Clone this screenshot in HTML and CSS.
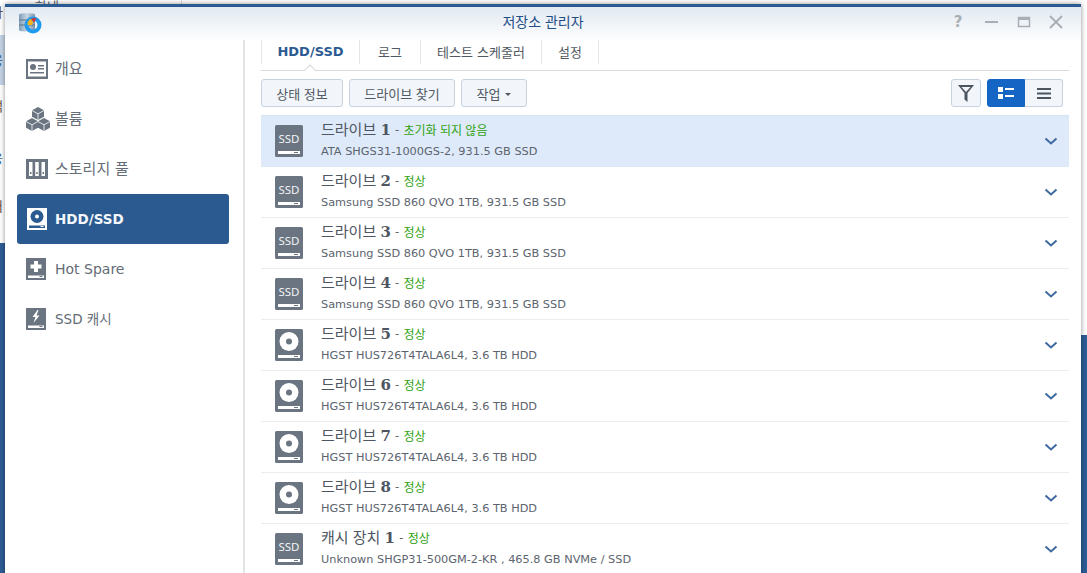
FILE: index.html
```html
<!DOCTYPE html>
<html lang="ko">
<head>
  <meta charset="UTF-8">
  <title>저장소 관리자</title>
  <link rel="stylesheet" href="styles.css">
</head>
<body>
  <svg class="defs" width="0" height="0">
    <symbol id="hdd" viewBox="0 0 28 32">
      <rect width="28" height="32" rx="1.5" fill="#6b7582"/>
      <circle cx="14" cy="12.5" r="9.5" fill="#fff"/>
      <circle cx="14" cy="12.5" r="3" fill="#6b7582"/>
      <rect x="3" y="26" width="22" height="3" fill="#fff"/>
      <rect x="19" y="27" width="4" height="1" fill="#6b7582"/>
    </symbol>
    <symbol id="ssd" viewBox="0 0 28 32">
      <rect width="28" height="32" rx="1.5" fill="#6b7582"/>
      <rect x="3" y="26" width="22" height="3" fill="#fff"/>
      <rect x="19" y="27" width="4" height="1" fill="#6b7582"/>
    </symbol>
    <symbol id="chevron" viewBox="0 0 14 9">
      <path d="M1.500 1.500 7 6.500l5.500-5" fill="none" stroke="#3f6a9f" stroke-width="2"/>
    </symbol>
  </svg>

  <div class="desktop">
    <div class="back back-left">
      <span class="back-selected"></span>
      <span class="back-char c1">나</span>
      <span class="back-char c2">웅</span>
      <span class="back-char c3">맥</span>
      <span class="back-char c4">응</span>
      <span class="back-char c5">더</span>
    </div>
    <div class="back back-top">
      <span class="back-rule"></span>
      <span class="back-word">하네</span>
    </div>
    <div class="back back-right"></div>

    <div class="window">
      <header class="titlebar">
        <svg class="app-icon" width="24" height="22" viewBox="0 0 24 22">
          <defs>
            <linearGradient id="can" x1="0" x2="1" y1="0" y2="0">
              <stop offset="0" stop-color="#7f9db8"/>
              <stop offset=".5" stop-color="#c9d6e0"/>
              <stop offset="1" stop-color="#7b94ab"/>
            </linearGradient>
          </defs>
          <path d="M1 2.500C1 .8 17 .8 17 2.500V18c0 2-16 2-16 0z" fill="url(#can)"/>
          <path d="M1 8h16M1 13h16" stroke="#5d7488" stroke-width="1"/>
          <circle cx="15" cy="13" r="6.500" fill="none" stroke="#1e9bef" stroke-width="4"/>
          <path d="M9.500 13A6.500 6.500 0 0 1 13 6.800L15 10.500l-1 2.500z" fill="#f2b51c"/>
          <path d="M13 6.500 18.500 6 16 10.500z" fill="#df2a2a"/>
        </svg>
        <h1 class="title">저장소 관리자</h1>
        <div class="win-controls">
          <span class="help">?</span>
          <svg width="14" height="14" viewBox="0 0 14 14"><rect x="0" y="6" width="13" height="2" fill="#a9aeb4"/></svg>
          <svg width="14" height="14" viewBox="0 0 14 14"><path d="M1.500 2.500h11v9h-11z" fill="none" stroke="#a9aeb4" stroke-width="1.500"/><rect x="1" y="2" width="12" height="3" fill="#a9aeb4"/></svg>
          <svg width="14" height="14" viewBox="0 0 14 14"><path d="m1 1 12 12M13 1 1 13" stroke="#a9aeb4" stroke-width="1.800"/></svg>
        </div>
      </header>

      <div class="body">
        <nav class="sidebar">
          <a class="nav-item">
            <svg class="nav-icon" width="22" height="20" viewBox="0 0 22 20"><rect width="22" height="20" fill="#6b7582"/><rect x="2" y="2.500" width="18" height="15" fill="#fff"/><circle cx="7" cy="8" r="3" fill="#6b7582"/><path d="M12 6h6v1.500h-6zM12 9h6v1.500h-6zM4 13h14v1.500H4z" fill="#6b7582"/></svg>
            <span class="ko">개요</span>
          </a>
          <a class="nav-item">
            <svg class="nav-icon" width="24" height="24" viewBox="0 0 24 24"><path d="M12 0l6 3.300v6.400l-6 3.300-6-3.300V3.300zM6 11l6 3.300v6.400l-6 3.300-6-3.300v-6.400zM18 11l6 3.300v6.400L18 24l-6-3.300v-6.400z" fill="#6b7582"/><path d="M6 3.500l6 3.300 6-3.300M12 7v6M0 14.500l6 3.300 6-3.300M6 18v6M12 14.500l6 3.300 6-3.300M18 18v6" fill="none" stroke="#fff" stroke-width=".8"/></svg>
            <span class="ko">볼륨</span>
          </a>
          <a class="nav-item">
            <svg class="nav-icon" width="22" height="20" viewBox="0 0 22 20"><rect width="22" height="20" fill="#6b7582"/><path d="M3 3h3.500v14H3zM9.200 3h3.500v14H9.200zM15.500 3H19v14h-3.500z" fill="#fff"/><path d="M4 13h1.500v2H4zM10.200 13h1.500v2h-1.500zM16.500 13H18v2h-1.500z" fill="#6b7582"/></svg>
            <span class="ko">스토리지 풀</span>
          </a>
          <a class="nav-item active">
            <svg class="nav-icon" width="20" height="22" viewBox="0 0 20 22"><rect width="20" height="22" fill="#fff"/><circle cx="10" cy="8.500" r="6.500" fill="#2a5a8f"/><circle cx="10" cy="8.500" r="2" fill="#fff"/><rect x="2" y="17.500" width="16" height="2.500" fill="#2a5a8f"/><rect x="13.500" y="18" width="3" height="1" fill="#fff"/></svg>
            <span>HDD/SSD</span>
          </a>
          <a class="nav-item">
            <svg class="nav-icon" width="20" height="22" viewBox="0 0 20 22"><rect width="20" height="22" fill="#6b7582"/><path d="M8 3h4v3.500h3.500v4H12V14H8v-3.500H4.500v-4H8z" fill="#fff"/><rect x="2" y="17.500" width="16" height="2.500" fill="#fff"/><rect x="13.500" y="18" width="3" height="1" fill="#6b7582"/></svg>
            <span class="latin">Hot Spare</span>
          </a>
          <a class="nav-item">
            <svg class="nav-icon" width="20" height="22" viewBox="0 0 20 22"><rect width="20" height="22" fill="#6b7582"/><path d="M11.500 2 6.500 9h3L7.500 15l6-7.500h-3l2-5.500z" fill="#fff"/><rect x="2" y="17.500" width="16" height="2.500" fill="#fff"/><rect x="13.500" y="18" width="3" height="1" fill="#6b7582"/></svg>
            <span class="raised">SSD 캐시</span>
          </a>
        </nav>

        <main class="content">
          <div class="tabs">
            <a class="tab active">HDD/SSD</a>
            <a class="tab">로그</a>
            <a class="tab">테스트 스케줄러</a>
            <a class="tab">설정</a>
          </div>

          <div class="toolbar">
            <button class="btn">상태 정보</button>
            <button class="btn">드라이브 찾기</button>
            <button class="btn">작업 <i class="caret"></i></button>
            <div class="toolbar-right">
              <button class="btn icon-btn">
                <svg width="18" height="19" viewBox="0 0 18 19"><path d="M1 1h16L10.500 9v9l-3-2.500V9z M4.500 3 9 8l4.500-5z" fill="#4b5560" fill-rule="evenodd"/></svg>
              </button>
              <div class="view-toggle">
                <button class="btn toggle-on">
                  <svg width="16" height="12" viewBox="0 0 16 12"><path d="M0 0h5v5H0zM0 7h5v5H0zM7 1h9v2H7zM7 8h9v2H7z" fill="#fff"/></svg>
                </button>
                <button class="btn toggle-off">
                  <svg width="14" height="11" viewBox="0 0 14 11"><path d="M0 0h14v2H0zM0 4.500h14v2H0zM0 9h14v2H0z" fill="#4b5560"/></svg>
                </button>
              </div>
            </div>
          </div>

          <ul class="drives">
            <li class="drive selected">
              <svg class="drive-icon" width="28" height="32" viewBox="0 0 28 32"><use href="#ssd"/><text class="ssd-label" x="14" y="18" text-anchor="middle">SSD</text></svg>
              <div class="drive-text">
                <div class="drive-name">드라이브 <b>1</b> <span class="dash">-</span> <span class="status">초기화 되지 않음</span></div>
                <div class="drive-model">ATA SHGS31-1000GS-2, 931.5 GB SSD</div>
              </div>
              <svg class="chevron" width="14" height="9"><use href="#chevron"/></svg>
            </li>
            <li class="drive">
              <svg class="drive-icon" width="28" height="32" viewBox="0 0 28 32"><use href="#ssd"/><text class="ssd-label" x="14" y="18" text-anchor="middle">SSD</text></svg>
              <div class="drive-text">
                <div class="drive-name">드라이브 <b>2</b> <span class="dash">-</span> <span class="status">정상</span></div>
                <div class="drive-model">Samsung SSD 860 QVO 1TB, 931.5 GB SSD</div>
              </div>
              <svg class="chevron" width="14" height="9"><use href="#chevron"/></svg>
            </li>
            <li class="drive">
              <svg class="drive-icon" width="28" height="32" viewBox="0 0 28 32"><use href="#ssd"/><text class="ssd-label" x="14" y="18" text-anchor="middle">SSD</text></svg>
              <div class="drive-text">
                <div class="drive-name">드라이브 <b>3</b> <span class="dash">-</span> <span class="status">정상</span></div>
                <div class="drive-model">Samsung SSD 860 QVO 1TB, 931.5 GB SSD</div>
              </div>
              <svg class="chevron" width="14" height="9"><use href="#chevron"/></svg>
            </li>
            <li class="drive">
              <svg class="drive-icon" width="28" height="32" viewBox="0 0 28 32"><use href="#ssd"/><text class="ssd-label" x="14" y="18" text-anchor="middle">SSD</text></svg>
              <div class="drive-text">
                <div class="drive-name">드라이브 <b>4</b> <span class="dash">-</span> <span class="status">정상</span></div>
                <div class="drive-model">Samsung SSD 860 QVO 1TB, 931.5 GB SSD</div>
              </div>
              <svg class="chevron" width="14" height="9"><use href="#chevron"/></svg>
            </li>
            <li class="drive">
              <svg class="drive-icon" width="28" height="32"><use href="#hdd"/></svg>
              <div class="drive-text">
                <div class="drive-name">드라이브 <b>5</b> <span class="dash">-</span> <span class="status">정상</span></div>
                <div class="drive-model">HGST HUS726T4TALA6L4, 3.6 TB HDD</div>
              </div>
              <svg class="chevron" width="14" height="9"><use href="#chevron"/></svg>
            </li>
            <li class="drive">
              <svg class="drive-icon" width="28" height="32"><use href="#hdd"/></svg>
              <div class="drive-text">
                <div class="drive-name">드라이브 <b>6</b> <span class="dash">-</span> <span class="status">정상</span></div>
                <div class="drive-model">HGST HUS726T4TALA6L4, 3.6 TB HDD</div>
              </div>
              <svg class="chevron" width="14" height="9"><use href="#chevron"/></svg>
            </li>
            <li class="drive">
              <svg class="drive-icon" width="28" height="32"><use href="#hdd"/></svg>
              <div class="drive-text">
                <div class="drive-name">드라이브 <b>7</b> <span class="dash">-</span> <span class="status">정상</span></div>
                <div class="drive-model">HGST HUS726T4TALA6L4, 3.6 TB HDD</div>
              </div>
              <svg class="chevron" width="14" height="9"><use href="#chevron"/></svg>
            </li>
            <li class="drive">
              <svg class="drive-icon" width="28" height="32"><use href="#hdd"/></svg>
              <div class="drive-text">
                <div class="drive-name">드라이브 <b>8</b> <span class="dash">-</span> <span class="status">정상</span></div>
                <div class="drive-model">HGST HUS726T4TALA6L4, 3.6 TB HDD</div>
              </div>
              <svg class="chevron" width="14" height="9"><use href="#chevron"/></svg>
            </li>
            <li class="drive">
              <svg class="drive-icon" width="28" height="32" viewBox="0 0 28 32"><use href="#ssd"/><text class="ssd-label" x="14" y="18" text-anchor="middle">SSD</text></svg>
              <div class="drive-text">
                <div class="drive-name">캐시 장치 <b>1</b> <span class="dash">-</span> <span class="status">정상</span></div>
                <div class="drive-model">Unknown SHGP31-500GM-2-KR , 465.8 GB NVMe / SSD</div>
              </div>
              <svg class="chevron" width="14" height="9"><use href="#chevron"/></svg>
            </li>
          </ul>
        </main>
      </div>
    </div>
  </div>
</body>
</html>
```

FILE: styles.css
```css
html, body {
  margin: 0;
  padding: 0;
}
body {
  font-family: "DejaVu Sans", "Noto Sans CJK KR", sans-serif;
  color: #4e5661;
  overflow: hidden;
}
.defs {
  position: absolute;
}
.desktop {
  position: relative;
  width: 1087px;
  height: 573px;
  overflow: hidden;
  background: #2d5d97;
}

/* window behind the storage manager */
.back {
  position: absolute;
  background: #fff;
}
.back-left {
  left: 0;
  top: 0;
  width: 6px;
  height: 243px;
  overflow: hidden;
}
.back-top {
  left: 6px;
  top: 0;
  width: 1081px;
  height: 5px;
  overflow: hidden;
}
.back-rule {
  position: absolute;
  left: 175px;
  top: 0;
  width: 1px;
  height: 5px;
  background: #dcdcdc;
}
.back-word {
  position: absolute;
  left: 29px;
  top: -1px;
  font: 13px/13px "Noto Sans CJK KR", sans-serif;
  color: #5a6068;
}
.back-right {
  left: 1081px;
  top: 0;
  width: 6px;
  height: 335px;
}
.back-selected {
  position: absolute;
  left: 0;
  top: 35px;
  width: 6px;
  height: 50px;
  background: #c4d4e6;
}
.back-char {
  position: absolute;
  left: -9px;
  font: 13px "Noto Sans CJK KR", sans-serif;
  color: #5a4a40;
}
.c1 { top: 2px; }
.c2 { top: 50px; color: #2f5d90; }
.c3 { top: 96px; }
.c4 { top: 148px; color: #2f5d90; }
.c5 { top: 196px; }

.window {
  position: absolute;
  left: 5px;
  top: 4px;
  width: 1076px;
  height: 569px;
  background: #fff;
  border-top: 3px solid #2b5a92;
  box-shadow: 0 0 5px rgba(0, 0, 0, 0.45);
  display: flex;
  flex-direction: column;
}

.titlebar {
  height: 33px;
  flex: none;
  display: flex;
  align-items: center;
  padding-left: 13px;
  position: relative;
  background: linear-gradient(#e2e9f2, #fdfefe);
}
.app-icon {
  margin-top: -2px;
}
.title {
  position: absolute;
  left: 0;
  right: 0;
  top: 5px;
  margin: 0;
  text-align: center;
  font-family: "Noto Sans CJK KR", sans-serif;
  font-size: 14px;
  line-height: 19px;
  font-weight: 400;
  color: #1f4e85;
}
.win-controls {
  margin-left: auto;
  margin-right: 18px;
  margin-top: -4px;
  display: flex;
  align-items: center;
  gap: 18px;
}
.help {
  width: 14px;
  margin-right: 2px;
  text-align: center;
  font-size: 15px;
  font-weight: 700;
  line-height: 14px;
  color: #a9aeb4;
}

.body {
  flex: 1;
  display: flex;
  min-height: 0;
}

.sidebar {
  width: 240px;
  flex: none;
  box-sizing: border-box;
  padding: 4px 14px 0 12px;
  border-right: 2px solid #e3e4e6;
}
.nav-item {
  height: 50px;
  display: flex;
  align-items: center;
  box-sizing: border-box;
  padding-left: 9px;
  border-radius: 3px;
  font-size: 13.500px;
  color: #646c76;
  position: relative;
}
.nav-icon {
  flex: none;
}
.nav-item span {
  position: absolute;
  left: 38px;
}
.nav-item .ko {
  font-size: 15px;
  margin-top: -3px;
}
.nav-item .latin {
  font-size: 14px;
}
.nav-item .raised {
  margin-top: -3px;
}
.nav-item.active {
  background: #2a5a8f;
  color: #f4f7fb;
  font-weight: 700;
  padding-left: 10px;
}

.content {
  flex: 1;
  min-width: 0;
  padding: 0 12px 0 16px;
}

.tabs {
  height: 31px;
  box-sizing: border-box;
  display: flex;
  border-bottom: 1px solid #d7d9dc;
}
.tab {
  height: 24px;
  box-sizing: border-box;
  padding-bottom: 2px;
  display: flex;
  align-items: center;
  justify-content: center;
  border-right: 1px solid #e2e5e9;
  font-size: 13px;
  color: #505862;
}
.tab:nth-child(1) { width: 99px; border-left: 1px solid #e2e5e9; }
.tab:nth-child(2) { width: 61px; }
.tab:nth-child(3) { width: 121px; }
.tab:nth-child(4) { width: 57px; }
.tab.active {
  font-weight: 700;
  color: #2b5a92;
  position: relative;
}
.tab.active::after {
  content: "";
  position: absolute;
  left: 44px;
  bottom: -10px;
  width: 7px;
  height: 7px;
  background: #fff;
  border-left: 1px solid #d7d9dc;
  border-top: 1px solid #d7d9dc;
  transform: rotate(45deg);
}

.toolbar {
  display: flex;
  gap: 6px;
  margin-top: 8px;
  height: 28px;
}
.toolbar-right {
  margin-left: auto;
  margin-right: 6px;
  display: flex;
  gap: 6px;
}
.btn {
  height: 28px;
  box-sizing: border-box;
  padding: 0;
  border: 1px solid #c6d2df;
  border-radius: 3px;
  background: #f2f6fb;
  font-family: "Noto Sans CJK KR", sans-serif;
  font-size: 13px;
  color: #505862;
  display: flex;
  align-items: center;
  justify-content: center;
  gap: 5px;
}
.toolbar > .btn:nth-child(1) { width: 82px; }
.toolbar > .btn:nth-child(2) { width: 106px; }
.toolbar > .btn:nth-child(3) { width: 66px; }
.caret {
  display: inline-block;
  margin-top: 2px;
  border-left: 3px solid transparent;
  border-right: 3px solid transparent;
  border-top: 3px solid #505862;
}
.icon-btn {
  width: 30px;
}
.view-toggle {
  display: flex;
}
.toggle-on {
  width: 38px;
  background: #1565c4;
  border-color: #1565c4;
  border-radius: 3px 0 0 3px;
}
.toggle-off {
  width: 38px;
  border-left: 0;
  border-radius: 0 3px 3px 0;
}

.drives {
  list-style: none;
  margin: 8px 0 0;
  padding: 0;
}
.drive {
  height: 51px;
  box-sizing: border-box;
  display: flex;
  align-items: flex-start;
  padding: 9px 11px 0 14px;
  border-top: 1px solid #e9edf1;
}
.drive.selected {
  background: #deeafa;
  border-top-color: #d6e3f3;
  height: 52px;
  margin-bottom: -1px;
  position: relative;
}
.drive-icon {
  flex: none;
}
.ssd-label {
  font-family: "Noto Sans", sans-serif;
  font-size: 11.500px;
  fill: #f0f2f4;
}
.drive-text {
  margin-left: 18px;
  flex: 1;
  min-width: 0;
}
.drive-name {
  font-family: "Noto Sans CJK KR", sans-serif;
  font-size: 15px;
  line-height: 18px;
  margin-top: -5px;
  color: #4e5661;
  white-space: nowrap;
}
.drive-name b {
  font-family: "DejaVu Serif", serif;
  font-size: 15px;
}
.dash {
  font-size: 12px;
}
.status {
  font-size: 12px;
  color: #2fa212;
}
.drive-model {
  font-size: 11.300px;
  line-height: 14px;
  margin-top: 6px;
  color: #5c646e;
  white-space: nowrap;
}
.chevron {
  flex: none;
  margin-top: 12px;
}
```
